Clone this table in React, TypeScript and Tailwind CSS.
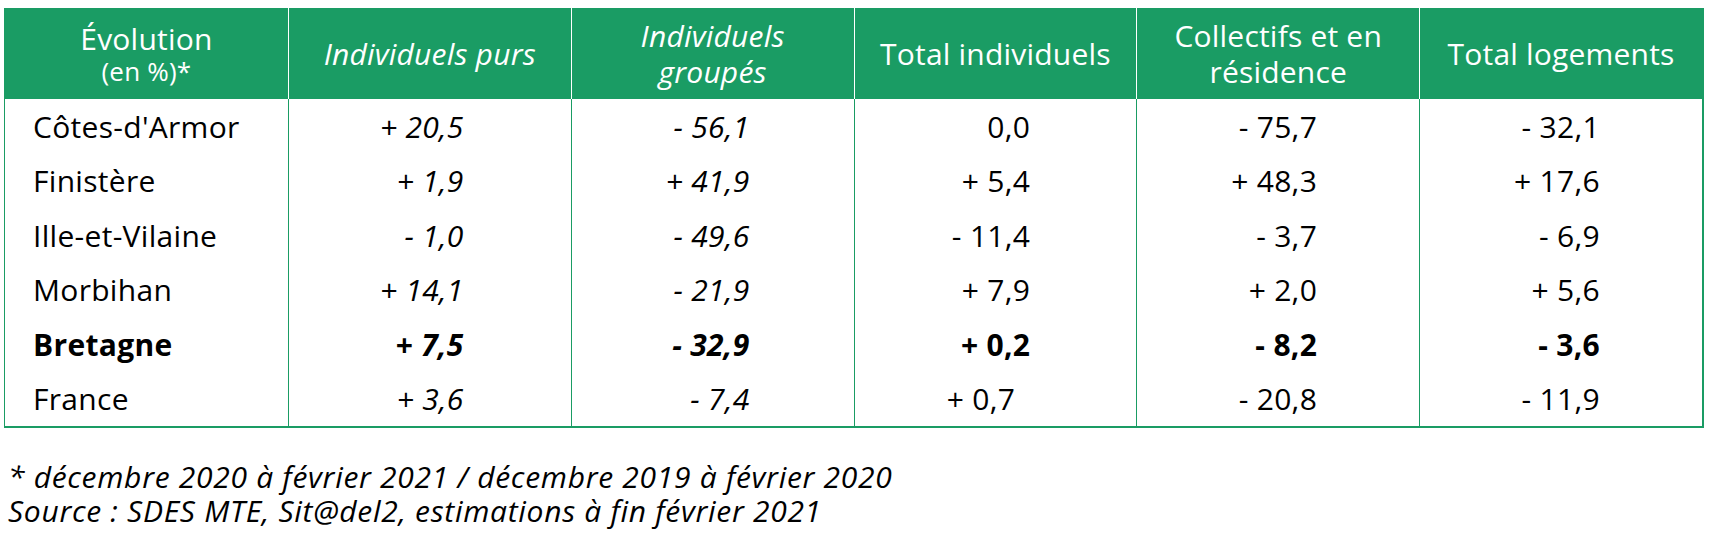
import React from 'react';

type Row = { name: string; bold?: boolean; values: string[]; pads?: Record<number, string> };

const rows: Row[] = [
  { name: "Côtes-d'Armor", values: ['+ 20,5', '- 56,1', '0,0', '- 75,7', '- 32,1'] },
  { name: 'Finistère', values: ['+ 1,9', '+ 41,9', '+ 5,4', '+ 48,3', '+ 17,6'] },
  { name: 'Ille-et-Vilaine', values: ['- 1,0', '- 49,6', '- 11,4', '- 3,7', '- 6,9'] },
  { name: 'Morbihan', values: ['+ 14,1', '- 21,9', '+ 7,9', '+ 2,0', '+ 5,6'] },
  { name: 'Bretagne', bold: true, values: ['+ 7,5', '- 32,9', '+ 0,2', '- 8,2', '- 3,6'] },
  { name: 'France', values: ['+ 3,6', '- 7,4', '+ 0,7', '- 20,8', '- 11,9'], pads: { 2: 'pr-[121px]' } },
];

// right padding per value column, so numbers line up where the source put them
const colPad = ['pr-[107px]', 'pr-[104px]', 'pr-[106px]', 'pr-[102px]', 'pr-[102px]'];

export default function App() {
  return (
    <div className="min-h-[540px] w-[1711px] bg-white pt-[8px] pl-[4px] font-['Open_Sans',sans-serif] text-black">
      {/* Table */}
      <div className="w-[1700px] border-l border-r-2 border-b-2 border-[#1a9c64]">
        {/* Header */}
        <div className="grid h-[91px] grid-cols-6 bg-[#1a9c64] text-white text-[30px] leading-[36px] tracking-[0.2px]">
          <div className="flex flex-col items-center justify-center">
            <span className="leading-[34px]">Évolution</span>
            <span className="text-[26px] leading-[30px]">(en %)*</span>
          </div>
          <div className="flex items-center justify-center border-l border-white italic">Individuels purs</div>
          <div className="flex flex-col items-center justify-center border-l border-white italic">
            <span>Individuels</span>
            <span>groupés</span>
          </div>
          <div className="flex items-center justify-center border-l border-white">Total individuels</div>
          <div className="flex flex-col items-center justify-center border-l border-white">
            <span>Collectifs et en</span>
            <span>résidence</span>
          </div>
          <div className="flex items-center justify-center border-l border-white">Total logements</div>
        </div>

        {/* Body */}
        <div className="grid grid-cols-6 text-[30px] tracking-[0.3px]">
          {rows.map((row) => (
            <React.Fragment key={row.name}>
              <div className={`flex h-[54.5px] items-center pl-[28px] ${row.bold ? 'font-bold' : ''}`}>{row.name}</div>
              {row.values.map((v, i) => (
                <div
                  key={i}
                  className={`flex h-[54.5px] items-center justify-end border-l border-[#1a9c64] ${
                    row.pads && row.pads[i] ? row.pads[i] : colPad[i]
                  } ${i < 2 ? 'italic' : ''} ${row.bold ? 'font-bold' : ''}`}
                >
                  {v}
                </div>
              ))}
            </React.Fragment>
          ))}
        </div>
      </div>

      {/* Notes */}
      <div className="mt-[32px] pl-[4px] text-[30px] leading-[34px] tracking-[0.7px] italic">
        <p>* décembre 2020 à février 2021 / décembre 2019 à février 2020</p>
        <p>Source : SDES MTE, Sit@del2, estimations à fin février 2021</p>
      </div>
    </div>
  );
}
